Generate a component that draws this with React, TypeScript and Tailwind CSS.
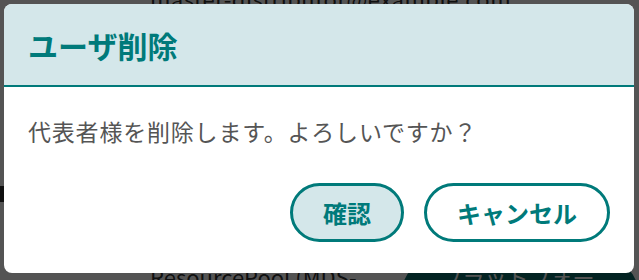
import React from "react";

const jp = { fontFamily: '"Noto Sans CJK JP", "Noto Sans", sans-serif' };

function Background() {
  return (
    <div className="h-[280px] w-[639px] bg-white text-[#333]" style={jp}>
      <div className="-mt-[12px] pl-[150px] text-[22px] leading-[20px] tracking-[0.5px]">
        master-distributor@example.com
      </div>
      <div className="mt-[178px] h-[16px] w-[4px] border-2 border-[#333]" />
      <div className="mt-[54px] flex items-center gap-[24px] pl-[150px]">
        <span className="text-[22px] leading-[40px]">ResourcePool (MDS-001)</span>
        <span className="rounded-full bg-[#0b6b68] px-[40px] text-[22px] leading-[40px] text-white">
          プラットフォーム
        </span>
      </div>
    </div>
  );
}

export default function App() {
  return (
    <div className="relative h-[280px] w-[639px] overflow-hidden">
      <Background />
      <div className="absolute inset-0 bg-black/[0.67] p-[4px] pr-[5px]" style={jp}>
        <div className="flex h-[269px] flex-col overflow-hidden rounded-[8px] bg-white">
          <div className="flex h-[83px] items-center border-b-2 border-[#007a7a] bg-[#d4e7ea] px-[24px]">
            <h2 className="text-[30px] font-bold leading-none text-[#007a7a]">ユーザ削除</h2>
          </div>
          <div className="px-[24px] pt-[29px] text-[23px] leading-[30px] tracking-[0.8px] text-[#555]">
            代表者様を削除します。よろしいですか？
          </div>
          <div className="mt-auto flex justify-end gap-[20px] px-[24px] pb-[31px]">
            <button className="h-[59px] rounded-full border-[3px] border-[#007a7a] bg-[#d4e7ea] px-[30px] text-[24px] font-bold text-[#007a7a]">
              確認
            </button>
            <button className="h-[59px] rounded-full border-[3px] border-[#007a7a] bg-white px-[30px] text-[24px] font-bold text-[#007a7a]">
              キャンセル
            </button>
          </div>
        </div>
      </div>
    </div>
  );
}
